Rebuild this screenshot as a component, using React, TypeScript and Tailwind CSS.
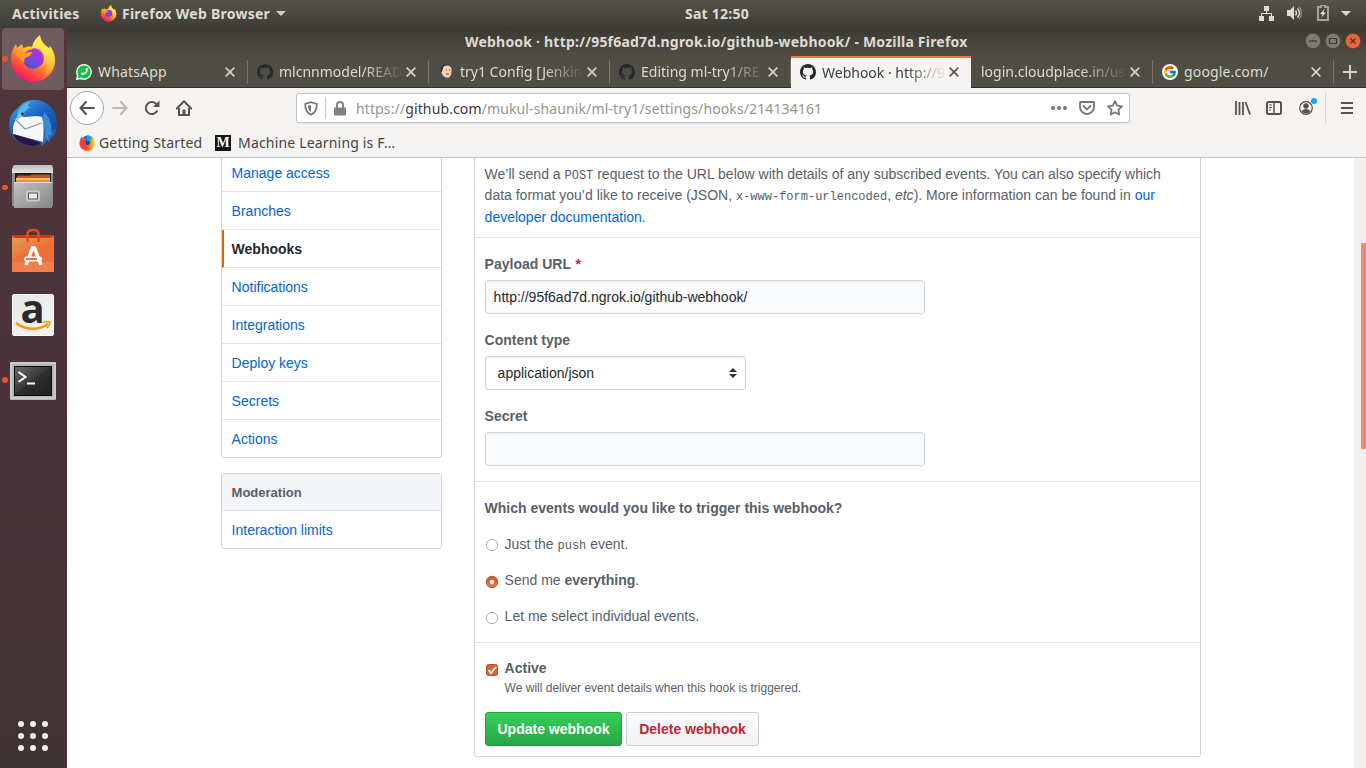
import React from "react";
import { FcGoogle } from "react-icons/fc";
import { FaPhoneAlt } from "react-icons/fa";

const GITHUB =
  "M8 0C3.58 0 0 3.58 0 8c0 3.54 2.29 6.53 5.47 7.59.4.07.55-.17.55-.38 0-.19-.01-.82-.01-1.49-2.01.37-2.53-.49-2.69-.94-.09-.23-.48-.94-.82-1.13-.28-.15-.68-.52-.01-.53.63-.01 1.08.58 1.23.82.72 1.21 1.87.87 2.33.66.07-.52.28-.87.51-1.07-1.78-.2-3.64-.89-3.64-3.95 0-.87.31-1.59.82-2.15-.08-.2-.36-1.02.08-2.12 0 0 .67-.21 2.2.82.64-.18 1.32-.27 2-.27.68 0 1.36.09 2 .27 1.53-1.04 2.2-.82 2.2-.82.44 1.1.16 1.92.08 2.12.51.56.82 1.27.82 2.15 0 3.07-1.87 3.75-3.65 3.95.29.25.54.73.54 1.48 0 1.07-.01 1.93-.01 2.2 0 .21.15.46.55.38A8.013 8.013 0 0016 8c0-4.42-3.58-8-8-8z";

function GithubIcon() {
  return (
    <svg width="16" height="16" viewBox="0 0 16 16" fill="#24292e" className="shrink-0">
      <path d={GITHUB} />
    </svg>
  );
}

function FirefoxLogo({ size, id }: { size: number; id: string }) {
  return (
    <svg width={size} height={size} viewBox="0 0 46 48" className="shrink-0">
      <defs>
        <linearGradient id={id + "a"} x1="0.8" y1="0.1" x2="0.25" y2="0.95">
          <stop offset="0" stopColor="#fff14a" />
          <stop offset="0.35" stopColor="#ffb52c" />
          <stop offset="0.6" stopColor="#ff6a32" />
          <stop offset="0.85" stopColor="#ff2f50" />
          <stop offset="1" stopColor="#e5187e" />
        </linearGradient>
        <linearGradient id={id + "b"} x1="0.7" y1="0" x2="0.3" y2="1">
          <stop offset="0" stopColor="#b833d8" />
          <stop offset="0.5" stopColor="#8242e8" />
          <stop offset="1" stopColor="#4c55cc" />
        </linearGradient>
        <linearGradient id={id + "c"} x1="0.5" y1="0" x2="0.5" y2="1">
          <stop offset="0" stopColor="#fff44f" />
          <stop offset="0.5" stopColor="#ffe04a" />
          <stop offset="1" stopColor="#ff9a2c" />
        </linearGradient>
      </defs>
      <path
        d="M1 24C1 18 3 13 6 9l1 4 5-4 1 4c3-1 7-2 10-1l3-5 14 8c3 3 5 7 5 11 0 12-10 21-22 21S1 37 1 24z"
        fill={`url(#${id}a)`}
      />
      <path
        d="M22 12c1-5 4-9 8-12 1 7 5 10 9 13l1-2c4 5 5 10 5 15-1 7-5 11-10 14 3-6 3-13-1-17-3-4-8-5-12-11z"
        fill={`url(#${id}c)`}
      />
      <circle cx="23" cy="24" r="10" fill={`url(#${id}b)`} />
      <path
        d="M6 17c4-1 7 0 9 2 2-2 4-2 7-2 0 4-5 5-7 6-1 1 0 3-1 5-2-4-8-5-8-11z"
        fill="#ff9a22"
      />
      <path d="M24 13c5 0 10 4 10 10 0 4-2 7-4 8 0-5 0-8-3-9 0-4-3-6-6-7z" fill="#a930cf" opacity="0.75" />
    </svg>
  );
}

function FirefoxClassic() {
  return (
    <svg width="16" height="16" viewBox="0 0 16 16" className="shrink-0">
      <defs>
        <linearGradient id="fc" x1="0" y1="0.5" x2="1" y2="0.5">
          <stop offset="0" stopColor="#ff3b47" />
          <stop offset="0.5" stopColor="#ff4a26" />
          <stop offset="0.8" stopColor="#ffa41c" />
          <stop offset="1" stopColor="#ffe226" />
        </linearGradient>
      </defs>
      <circle cx="8.500" cy="6.500" r="6" fill="#1177d8" />
      <path d="M8 .5c4 0 6 2 6 5l-2 4-4-1z" fill="#0ba5e6" />
      <path
        d="M.5 8.500C.5 5 1.500 3 3 1.500l.5 2 2-.3c.5 0 1 .8 2 1.200-1 .6-2 1-2 1.800 0 2.600 1.500 3.800 3.500 3.600 2.500-.4 3.500-2.800 2.200-5.300C13 4 12.500 2 12 1c2.500 1.500 3.700 4.500 3.700 7.500 0 4.500-3.500 7.300-7.500 7.300S.5 13 .5 8.500z"
        fill="url(#fc)"
      />
      <circle cx="8.700" cy="7.800" r="2" fill="#1c3f8f" />
    </svg>
  );
}

function Thunderbird() {
  return (
    <svg width="48" height="48" viewBox="0 0 48 48" className="mt-px">
      <defs>
        <linearGradient id="tb" x1="0.2" y1="0" x2="0.8" y2="1">
          <stop offset="0" stopColor="#3fa0df" />
          <stop offset="0.4" stopColor="#1d62c5" />
          <stop offset="0.75" stopColor="#174ba5" />
          <stop offset="1" stopColor="#2a8ad0" />
        </linearGradient>
      </defs>
      <path
        d="M22 0c12-1 21 5 24 14 3 8 2 17-2 23l-1-2-3 7-2-2-5 6-1-3-5 3C12 47 0 38 0 24 0 17 4 11 9 8c3-4 7-7 13-8z"
        fill="url(#tb)"
      />
      <path d="M4 27c1-5 3-9 6-11 8 3 15-2 23 1 2 5 2 14 1 25L4 34z" fill="#f4f6f8" />
      <path d="M5 18l11 11 17-6" fill="none" stroke="#8f979e" strokeWidth="1.200" />
      <path d="M4 34l29 9-7 3C16 46 8 42 4 34z" fill="#281448" />
      <path d="M8 20C7 10 13 3 22 1c-4 4-4 6 1 6-6 1-8 7-15 13z" fill="#58b8e8" />
      <path d="M8 20c0-3 1-6 4-7l4 1z" fill="#84c8e8" />
      <circle cx="13.500" cy="14" r="1.400" fill="#35231b" />
      <path d="M35 12c6 5 9 14 7 25l-2-3-1 6-3-3-2 8c3-10 2-17-1-26z" fill="#3d9ee0" opacity="0.75" />
    </svg>
  );
}

function Files() {
  return (
    <svg width="44" height="45" viewBox="0 0 44 45">
      <defs>
        <linearGradient id="fg" x1="0" y1="0" x2="1" y2="1">
          <stop offset="0" stopColor="#c2c2c2" />
          <stop offset="1" stopColor="#858585" />
        </linearGradient>
        <linearGradient id="ft" x1="0" y1="0" x2="0" y2="1">
          <stop offset="0" stopColor="#bdbdbd" />
          <stop offset="1" stopColor="#e5e5e5" />
        </linearGradient>
      </defs>
      <path d="M3 0h38l1 4v37H1V4z" fill="#8d8d8d" />
      <path d="M3 0h38l1 4v4H1V4z" fill="url(#ft)" />
      <path d="M4 8h36v10H4z" fill="#1d1d1d" />
      <path d="M6 10.500h13l2-1h18v3H6z" fill="#d84e18" />
      <path d="M5 12.500h34V18H5z" fill="#e79330" />
      <path d="M5 14h34" stroke="#fbead0" />
      <path d="M3 17h38v26H3z" fill="url(#fg)" />
      <path d="M3 17.500h38" stroke="#dedede" />
      <rect x="15" y="25.500" width="14" height="11" rx="2" fill="#c9c9c9" />
      <rect x="17.500" y="28" width="9" height="6" fill="#e8e8e8" stroke="#555" />
    </svg>
  );
}

function Software() {
  return (
    <svg width="44" height="46" viewBox="0 0 44 46">
      <defs>
        <linearGradient id="sw" x1="0" y1="0" x2="0.6" y2="1">
          <stop offset="0" stopColor="#e59c5c" />
          <stop offset="0.55" stopColor="#ef6e34" />
          <stop offset="1" stopColor="#f0723a" />
        </linearGradient>
      </defs>
      <path d="M1 10l2-3h38l2 3z" fill="#c33e10" />
      <path d="M1 7l4 3H1zM43 7l-4 3h4z" fill="#e8622e" />
      <path d="M1 10h42v34H1z" fill="url(#sw)" />
      <path d="M1 34h42v10H1z" fill="#fff" opacity="0.1" />
      <path d="M16.500 14V6c0-3 2-4 5.500-4s5.500 1 5.500 4v8" fill="none" stroke="#dc4d1c" strokeWidth="2.500" />
      <path d="M15 37l6.500-17h2L30 37" fill="none" stroke="#fff" strokeWidth="3.500" />
      <rect x="13" y="28.500" width="18" height="5" rx="2.500" fill="#fff" />
      <rect x="15" y="30" width="11" height="2" fill="#ef6e34" />
    </svg>
  );
}

function Amazon() {
  return (
    <div className="relative flex h-[42px] w-[42px] justify-center rounded-[2px] border border-white bg-gradient-to-br from-[#e6e6e6] to-[#f4f4f4]">
      <span className="font-['Open_Sans',sans-serif] text-[40px] leading-[26px] font-bold text-[#2a2a2a]">a</span>
      <svg width="40" height="13" viewBox="0 0 40 13" className="absolute bottom-[2px] left-0">
        <path d="M3 3c9 7 22 8 32 1" fill="none" stroke="#f90" strokeWidth="2.600" />
        <path d="M30 2.500c3-1 5-1 7-.5 0 2-1 4-3 6" fill="none" stroke="#f90" strokeWidth="1.600" />
      </svg>
    </div>
  );
}

function Terminal() {
  return (
    <svg width="46" height="38" viewBox="0 0 46 38" className="mt-px">
      <defs>
        <linearGradient id="tm" x1="0" y1="0" x2="1" y2="1">
          <stop offset="0" stopColor="#686868" />
          <stop offset="0.45" stopColor="#3c3c3c" />
          <stop offset="0.5" stopColor="#2e2e2e" />
          <stop offset="1" stopColor="#1f1f1f" />
        </linearGradient>
      </defs>
      <rect width="46" height="38" rx="1" fill="#b5b5b5" />
      <rect x="1" y="1" width="44" height="35" fill="none" stroke="#e0e0e0" />
      <rect x="4" y="4" width="38" height="30" fill="#0c0c0c" />
      <rect x="5" y="5" width="36" height="28" fill="url(#tm)" />
      <path d="M8.500 10l7 5-7 5" fill="none" stroke="#fff" strokeWidth="2" />
      <path d="M17 21.500h8" stroke="#fff" strokeWidth="2" />
    </svg>
  );
}

function Jenkins() {
  return (
    <svg width="16" height="16" viewBox="0 0 16 16" className="shrink-0">
      <path d="M3 7C2 3 4 .5 8 .5S14 3 13.500 8c-.3 4-2 6-4.500 6S4 11 3 7z" fill="#f2d3b4" />
      <path d="M2.500 8C1.500 3 4 0 8 0c3 0 5 1 5.500 3C10 1 6 1 5 4c0 2-1 2-1 4z" fill="#3a3330" />
      <path d="M1 16c0-3 3-3 5-3l3 1 5-1c1 0 1.500 2 1.500 3z" fill="#2d5265" />
      <path d="M7 13l3 1 2-1v3l-2-1-3 1z" fill="#d5232f" />
      <path d="M8 6h1M11 6h1M8 10h3" stroke="#5a3c30" />
    </svg>
  );
}

function WhatsApp() {
  return (
    <span className="relative flex h-4 w-4 shrink-0">
      <svg width="16" height="16" viewBox="0 0 16 16">
        <path
          d="M.7 15.300l1-3.800A7.200 7.200 0 1 1 4.600 14.300z"
          fill="#11c143"
          stroke="#fff"
          strokeWidth="1.300"
        />
      </svg>
      <FaPhoneAlt size={7} color="#fff" className="absolute top-[4px] left-[5px] -scale-x-100" />
    </span>
  );
}

function Close({ dark }: { dark?: boolean }) {
  return (
    <svg width="10" height="10" viewBox="0 0 10 10" className="mr-3 shrink-0">
      <path d="M.7.700l8.600 8.600M9.300.700L.7 9.300" stroke={dark ? "#55534f" : "#d4d1ca"} strokeWidth="1.700" />
    </svg>
  );
}

function Tab({
  icon,
  text,
  active,
  fade,
}: {
  icon?: React.ReactNode;
  text: string;
  active?: boolean;
  fade?: boolean;
}) {
  return (
    <div
      className={
        "flex h-8 shrink-0 items-center " +
        (icon ? "pl-[9px] " : "pl-[10px] ") +
        (active
          ? "w-[180px] border-t-2 border-[#f07746] bg-[#f4f3f1] pr-0 pb-0.5 text-[#3d3d3d]"
          : "border-b border-[#32302c] text-[#dfdbd2] " + (icon ? "w-[181px]" : "w-[182px]"))
      }
    >
      {icon}
      <span
        className={
          "block min-w-0 flex-1 whitespace-nowrap " +
          (icon ? "ml-[6px]" : "ml-0") +
          (fade ? " mr-[3px] [mask-image:linear-gradient(to_right,black_68%,transparent_100%)]" : " tracking-[0.15px]")
        }
      >
        {text}
      </span>
      <Close dark={active} />
      {!active && <i className="h-6 w-px bg-[#77746c]" />}
    </div>
  );
}

function Dock({ children, dot, h }: { children: React.ReactNode; dot?: boolean; h: string }) {
  return (
    <div className={"relative flex w-full items-center justify-center pr-[2px] " + h}>
      {dot && <i className="absolute top-1/2 left-[2px] -mt-[3px] h-[5.500px] w-[5.500px] rounded-full bg-[#e95420]" />}
      {children}
    </div>
  );
}

function Radio({ on, top }: { on?: boolean; top: string }) {
  return (
    <svg width="14" height="14" viewBox="0 0 14 14" className={"mr-[6px] shrink-0 " + top}>
      <defs>
        <linearGradient id="rd" x1="0" y1="0" x2="0" y2="1">
          <stop offset="0" stopColor="#cf5527" />
          <stop offset="1" stopColor="#e08058" />
        </linearGradient>
      </defs>
      <circle cx="7" cy="7" r="5.700" fill={on ? "url(#rd)" : "#fff"} stroke={on ? "#b9522c" : "#b4b0ac"} />
      {on && <circle cx="7" cy="7" r="2.200" fill="#fff" />}
    </svg>
  );
}

const code = "font-['Liberation_Mono',monospace] text-[12px]";
const link = "text-[#0366d6]";
const menu = ["Manage access", "Branches", "Webhooks", "Notifications", "Integrations", "Deploy keys", "Secrets", "Actions"];

export default function App() {
  return (
    <div className="flex h-[768px] w-[1366px] flex-col overflow-hidden bg-white font-['Noto_Sans',sans-serif] text-[14px]">
      <header className="flex h-[28px] shrink-0 items-center bg-gradient-to-b from-[#575349] to-[#3d3c37] pb-[2px] text-[14px] font-bold tracking-[0.25px] text-[#dfdbd2]">
        <span className="w-[100px] pl-3">Activities</span>
        <FirefoxLogo size={17} id="top" />
        <span className="ml-[5px] w-[151px] whitespace-nowrap">Firefox Web Browser</span>
        <svg width="10" height="5" viewBox="0 0 10 5" className="ml-[3px]">
          <path d="M0 0h10L5 5z" fill="#cfccc5" />
        </svg>
        <span className="ml-[399px] w-[70px] whitespace-nowrap">Sat 12:50</span>
        <div className="ml-auto flex items-center pr-[15px]">
          <svg width="15" height="15" viewBox="0 0 15 15" fill="#dfdbd2">
            <path d="M5 0h5v5H8v2h5v3h2v5h-5v-5h2V8H3v2h2v5H0v-5h2V7h5V5H5z" />
          </svg>
          <svg width="16" height="14" viewBox="0 0 16 14" className="ml-[13px]">
            <path d="M0 4h3l4-4v14l-4-4H0z" fill="#dfdbd2" />
            <path d="M8.500 4.500q2 2.500 0 5M10.500 2.500q4 4.500 0 9" fill="none" stroke="#dfdbd2" strokeWidth="1.400" />
            <path d="M12 1q5 6 0 12" fill="none" stroke="#8e8b84" strokeWidth="1.400" />
          </svg>
          <svg width="12" height="16" viewBox="0 0 12 16" className="ml-[14px]">
            <path d="M4 0h4v2h3v13H1V2h3z" fill="none" stroke="#a5a29b" strokeWidth="2" />
            <path d="M7.500 4L3 9h2.500L4.500 12.500 9 7.500H6.500z" fill="#dfdbd2" />
          </svg>
          <svg width="10" height="5" viewBox="0 0 10 5" className="ml-[12px]">
            <path d="M0 0h10L5 5z" fill="#dfdbd2" />
          </svg>
        </div>
      </header>

      <div className="flex min-h-0 flex-1">
        <aside className="relative flex w-[67px] shrink-0 flex-col items-center bg-gradient-to-b from-[#51363b] via-[#4b323a] to-[#403335]">
          <div className="mr-[2px] flex h-[62px] w-[62px] items-center justify-center rounded-[4px] bg-[#705b5e]">
            <FirefoxLogo size={48} id="dock" />
          </div>
          <i className="absolute top-[28px] left-[2px] h-[5.500px] w-[5.500px] rounded-full bg-[#e95420]" />
          <Dock h="h-[66px]"><Thunderbird /></Dock>
          <Dock h="h-[63px]" dot><Files /></Dock>
          <Dock h="h-[64px]"><Software /></Dock>
          <Dock h="h-[64px]"><Amazon /></Dock>
          <Dock h="h-[66px]" dot><Terminal /></Dock>
          <div className="mt-auto mr-[2px] mb-[17px] grid grid-cols-3 gap-[6px]">
            {Array.from({ length: 9 }, (_, i) => (
              <i key={i} className="h-[6px] w-[6px] rounded-full bg-[#f2f1f0]" />
            ))}
          </div>
        </aside>

        <main className="flex min-w-0 flex-1 flex-col">
          <div className="flex h-[28px] shrink-0 items-center bg-gradient-to-b from-[#3a3934] to-[#504d45] pb-[2px]">
            <span className="ml-[398px] text-[14px] font-bold tracking-[0.21px] whitespace-nowrap text-[#dfdbd2]">
              Webhook · http://95f6ad7d.ngrok.io/github-webhook/ - Mozilla Firefox
            </span>
            <div className="ml-auto flex gap-1 pr-[5px]">
              {["M4 8h8", "M4.500 5.500h7v5h-7z", "M5.500 5.500l5 5M10.500 5.500l-5 5"].map((d, i) => (
                <svg key={d} width="16" height="16" viewBox="0 0 16 16">
                  <circle cx="8" cy="8" r="7.700" fill={i === 2 ? "#ec6338" : "#7d7b75"} stroke="#3d3a34" strokeWidth="0.600" />
                  <path d={d} fill="none" stroke="#393733" strokeWidth="1.200" />
                </svg>
              ))}
            </div>
          </div>

          <div className="flex h-[32px] shrink-0 bg-[#504d45]">
            <Tab icon={<WhatsApp />} text="WhatsApp" />
            <Tab icon={<GithubIcon />} text="mlcnnmodel/READ" fade />
            <Tab icon={<Jenkins />} text="try1 Config [Jenkin" fade />
            <Tab icon={<GithubIcon />} text="Editing ml-try1/RE" fade />
            <Tab icon={<GithubIcon />} text="Webhook · http://9" fade active />
            <Tab text="login.cloudplace.in/us" fade />
            <Tab
              icon={
                <span className="flex h-4 w-4 shrink-0 items-center justify-center rounded-full bg-white">
                  <FcGoogle size={14} />
                </span>
              }
              text="google.com/"
            />
            <div className="flex flex-1 items-center justify-center border-b border-[#32302c]">
              <svg width="14" height="14" viewBox="0 0 14 14">
                <path d="M7 0v14M0 7h14" stroke="#d8d4cc" strokeWidth="2" />
              </svg>
            </div>
          </div>

          <div className="flex h-[40px] shrink-0 items-center bg-[#f4f3f1]">
            <div className="ml-[3px] flex h-[34px] w-[34px] items-center justify-center rounded-full border border-[#aaa8a5] bg-white">
              <svg width="16" height="14" viewBox="0 0 16 14" fill="none" stroke="#55534f" strokeWidth="2" strokeLinecap="round">
                <path d="M15 7H1.500M7 1L1.500 7 7 13" />
              </svg>
            </div>
            <svg width="16" height="14" viewBox="0 0 16 14" className="ml-[8px]" fill="none" stroke="#bbb9b6" strokeWidth="2" strokeLinecap="round">
              <path d="M1 7h13.500M9 1l5.500 6L9 13" />
            </svg>
            <svg width="16" height="16" viewBox="0 0 16 16" className="ml-4">
              <path d="M13.300 10.500A6 6 0 1 1 12 3.800L14 6" fill="none" stroke="#55534f" strokeWidth="2" />
              <path d="M15.500.5V7H9z" fill="#55534f" />
            </svg>
            <svg width="16" height="16" viewBox="0 0 16 16" className="ml-4">
              <path d="M.8 8.500L8 1.300l7.200 7.200" fill="none" stroke="#55534f" strokeWidth="2" strokeLinecap="round" />
              <path d="M3 8v7h10V8" fill="none" stroke="#55534f" strokeWidth="2" />
              <path d="M6.500 9.500h3V15h-3z" fill="#55534f" />
            </svg>
            <div className="ml-[104px] flex h-[30px] w-[834px] items-center rounded-[3px] border border-[#c4c1be] bg-white shadow-[0_1px_2px_rgba(0,0,0,0.06)]">
              <svg width="14" height="15" viewBox="0 0 14 15" className="ml-[7px]">
                <path d="M7 1.200L12.800 3c.2 5-1 8.500-5.800 10.800C2.200 11.500 1 8 1.200 3z" fill="none" stroke="#777572" strokeWidth="1.700" />
                <path d="M7 4v7C4.500 9.500 4 7.500 4 4.800z" fill="#777572" />
              </svg>
              <i className="ml-[7px] h-[22px] w-px bg-[#c9c7c4]" />
              <svg width="12" height="15" viewBox="0 0 12 15" className="ml-[8px]">
                <path d="M3 7V4a3 3 0 0 1 6 0v3" fill="none" stroke="#83817e" strokeWidth="2" />
                <rect y="6.500" width="12" height="8" rx="1" fill="#83817e" />
              </svg>
              <span className="ml-[10px] tracking-[0.12px] whitespace-nowrap text-[#98958f]">
                https://<span className="text-[#3b3936]">github.com</span>/mukul-shaunik/ml-try1/settings/hooks/214134161
              </span>
              <svg width="16" height="4" viewBox="0 0 16 4" className="ml-auto" fill="#777572">
                <circle cx="2" cy="2" r="2" />
                <circle cx="8" cy="2" r="2" />
                <circle cx="14" cy="2" r="2" />
              </svg>
              <svg width="16" height="14" viewBox="0 0 16 14" className="ml-3" fill="none" stroke="#777572" strokeWidth="1.800">
                <path d="M1.500 1h13q.5 0 .5.500V6A7 7 0 0 1 1 6V1.500Q1 1 1.500 1z" />
                <path d="M4.500 5L8 8.300 11.500 5" strokeLinecap="round" />
              </svg>
              <svg width="16" height="16" viewBox="0 0 16 16" className="mr-[6px] ml-3" fill="none" stroke="#777572" strokeWidth="1.700" strokeLinejoin="round">
                <path d="M8 1.200l2.100 4.500 4.900.6-3.600 3.400.9 4.900L8 12.200l-4.300 2.400.9-4.900L1 6.300l4.900-.6z" />
              </svg>
            </div>
            <svg width="16" height="14" viewBox="0 0 16 14" className="ml-[105px]" stroke="#55534f">
              <path d="M1 0v14M4.500 1v13M8 1v13M10.500 1L15 13.500" fill="none" strokeWidth="1.800" />
            </svg>
            <svg width="16" height="14" viewBox="0 0 16 14" className="ml-[15px]" fill="none" stroke="#55534f">
              <rect x="1" y="1" width="14" height="12" rx="1.500" strokeWidth="2" />
              <path d="M8 1v12" strokeWidth="1.500" />
              <path d="M3 4h3M3 6.500h3M3 9h2" />
            </svg>
            <span className="relative ml-[17px] flex">
              <svg width="14" height="14" viewBox="0 0 14 14">
                <circle cx="7" cy="7" r="6.300" fill="none" stroke="#55534f" strokeWidth="1.200" />
                <circle cx="7" cy="5" r="2.700" fill="#55534f" />
                <path d="M2.500 10q2-2 4.500-2t4.500 2q-1.500 2.500-4.500 2.500T2.500 10z" fill="#55534f" />
              </svg>
              <i className="absolute -top-[3px] left-[12px] h-[6px] w-[6px] rounded-full bg-[#00adf5]" />
            </span>
            <i className="ml-3 h-[34px] w-px bg-[#d9d7d4]" />
            <svg width="12" height="12" viewBox="0 0 12 12" className="ml-[15px]">
              <path d="M0 1h12M0 6h12M0 11h12" stroke="#55534f" strokeWidth="2" />
            </svg>
          </div>

          <div className="flex h-[30px] shrink-0 items-center border-b border-[#c6c4c2] bg-[#f4f3f1] tracking-[0.18px] text-[#45433f]">
            <span className="ml-[12px] flex w-[20px]"><FirefoxClassic /></span>
            <span className="w-[116px] whitespace-nowrap">Getting Started</span>
            <span className="flex h-4 w-4 items-center justify-center bg-[#151515] font-['Liberation_Serif',serif] text-[14px] leading-none font-bold tracking-normal text-white">M</span>
            <span className="ml-[7px] whitespace-nowrap">Machine Learning is F…</span>
          </div>

          <div className="flex min-h-0 flex-1 overflow-hidden font-['Liberation_Sans',sans-serif] leading-[21px] text-[#586069]">
            <nav className={"ml-[154px] flex w-[221px] shrink-0 flex-col " + link}>
              <div className="-mt-[5px] rounded-[3px] border border-[#d1d5da]">
                {menu.map((m, i) => (
                  <div
                    key={m}
                    className={
                      "flex items-center pt-px " +
                      (i < menu.length - 1 ? "h-[38px] border-b border-[#e1e4e8] " : "h-[37px] ") +
                      (i === 2 ? "border-l-2 border-l-[#e36209] pl-[7.600px] font-bold text-[#24292e]" : "pl-[9.600px]")
                    }
                  >
                    {m}
                  </div>
                ))}
              </div>
              <div className="mt-[15px] rounded-[3px] border border-[#d1d5da]">
                <div className="flex h-[37px] items-center border-b border-[#e1e4e8] bg-[#f3f5f8] pl-[9.600px] text-[13px] font-bold text-[#586069]">
                  Moderation
                </div>
                <div className="flex h-[37px] items-center pt-px pl-[9.600px]">Interaction limits</div>
              </div>
            </nav>

            <section className="-mt-[5px] ml-8 flex h-[604px] w-[727px] shrink-0 flex-col rounded-[3px] border border-[#d1d5da]">
              <div className="flex h-[84px] shrink-0 flex-col border-b border-[#e1e4e8] pt-[9px] pl-[9.600px] whitespace-nowrap">
                <div className="h-[22px] pt-px">
                  We’ll send a <code className={code}>POST</code> request to the URL below with details of any subscribed events. You can also specify which
                </div>
                <div className="h-[21px]">
                  data format you’d like to receive (JSON, <code className={code}>x-www-form-urlencoded</code>, <em>etc</em>). More information can be found in <a className={link}>our</a>
                </div>
                <div className="h-[21px] pt-px">
                  <a className={link}>developer documentation</a>.
                </div>
              </div>
              <div className="flex h-[244px] shrink-0 flex-col border-b border-[#e1e4e8] pt-4 pl-[9.600px]">
                <b>Payload URL <span className="ml-px text-[#cb2431]">*</span></b>
                <div className="mt-[5px] flex h-[34px] w-[440px] items-center rounded-[3px] border border-[#d1d5da] bg-[#fafbfc] px-2 text-[#24292e] shadow-[inset_0_1px_2px_rgba(27,31,35,0.075)]">
                  http://95f6ad7d.ngrok.io/github-webhook/
                </div>
                <b className="mt-4">Content type</b>
                <div className="mt-[5px] flex h-[34px] w-[261px] items-center justify-between rounded-[3px] border border-[#d1d5da] bg-white pr-2 pl-3 text-[#24292e] shadow-[inset_0_1px_2px_rgba(27,31,35,0.075)]">
                  application/json
                  <svg width="8" height="10" viewBox="0 0 8 10" fill="#333">
                    <path d="M0 4l4-4 4 4zM0 6h8l-4 4z" />
                  </svg>
                </div>
                <b className="mt-4">Secret</b>
                <div className="mt-[5px] h-[34px] w-[440px] rounded-[3px] border border-[#d1d5da] bg-[#fafbfc] shadow-[inset_0_1px_2px_rgba(27,31,35,0.075)]" />
              </div>
              <div className="flex h-[161px] shrink-0 flex-col gap-[15px] border-b border-[#e1e4e8] pt-4 pl-[9.600px]">
                <b>Which events would you like to trigger this webhook?</b>
                <div className="flex h-[21px]"><Radio top="mt-[4px]" /><span>Just the <code className={code}>push</code> event.</span></div>
                <div className="flex h-[21px]"><Radio on top="mt-[5px]" /><span>Send me <b>everything</b>.</span></div>
                <div className="flex h-[21px]"><Radio top="mt-[5px]" /><span>Let me select individual events.</span></div>
              </div>
              <div className="flex flex-col pt-[15px] pl-[9.600px]">
                <div className="flex h-[21px]">
                  <svg width="14" height="14" viewBox="0 0 14 14" className="mt-[5px] mr-[6px]">
                    <rect x="1.500" y="1.500" width="11" height="11" rx="2" fill="#d7623a" stroke="#b9522c" />
                    <path d="M3.500 7l2.500 3 5-6" fill="none" stroke="#fff" strokeWidth="1.800" />
                  </svg>
                  <b>Active</b>
                </div>
                <span className="pl-5 text-[12px] leading-[18px]">We will deliver event details when this hook is triggered.</span>
                <div className="mt-[15px] flex gap-1 pl-[0.400px] font-bold">
                  <button className="h-[34px] w-[137px] rounded-[3px] border border-[#259a40] bg-gradient-to-b from-[#34d058] to-[#28a745] text-white">
                    Update webhook
                  </button>
                  <button className="h-[34px] w-[133px] rounded-[3px] border border-[#c9cccf] bg-gradient-to-b from-[#fafbfc] to-[#eff3f6] text-[#cb2431]">
                    Delete webhook
                  </button>
                </div>
              </div>
            </section>
            <div className="ml-auto flex w-3 justify-end bg-[#f1f0ee] pt-[85px]">
              <i className="h-[206px] w-[5px] rounded-l-[1px] bg-[#f08c69]" />
            </div>
          </div>
        </main>
      </div>
    </div>
  );
}
